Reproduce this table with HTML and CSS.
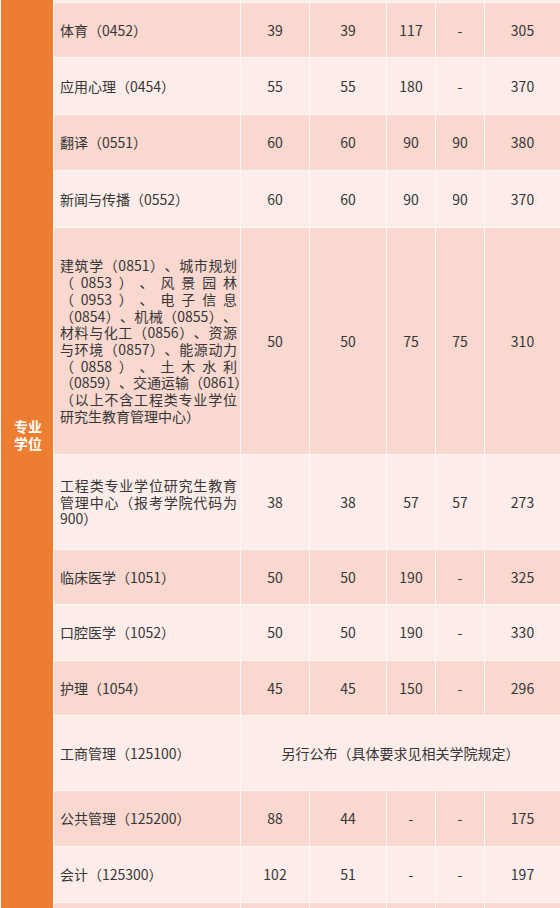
FILE: index.html
```html
<!DOCTYPE html>
<html lang="zh-CN">
<head>
<meta charset="utf-8">
<title>专业学位复试分数线</title>
<link rel="stylesheet" href="styles.css">
</head>
<body>
<div class="sheet">
  <div class="cat">专业<br>学位</div>

  <div class="row light edge"><div></div><div></div><div></div><div></div><div></div><div></div></div>

  <div class="row dark"><div class="name">体育（0452）</div><div class="num">39</div><div class="num">39</div><div class="num">117</div><div class="num">-</div><div class="num">305</div></div>
  <div class="row light"><div class="name">应用心理（0454）</div><div class="num">55</div><div class="num">55</div><div class="num">180</div><div class="num">-</div><div class="num">370</div></div>
  <div class="row dark"><div class="name">翻译（0551）</div><div class="num">60</div><div class="num">60</div><div class="num">90</div><div class="num">90</div><div class="num">380</div></div>
  <div class="row light"><div class="name">新闻与传播（0552）</div><div class="num">60</div><div class="num">60</div><div class="num">90</div><div class="num">90</div><div class="num">370</div></div>
  <div class="row dark"><div class="name multi"><span class="ln">建筑学（0851）、城市规划</span><span class="ln">（0853）、风景园林</span><span class="ln">（0953）、电子信息</span><span class="ln">（0854）、机械（0855）、</span><span class="ln">材料与化工（0856）、资源</span><span class="ln">与环境（0857）、能源动力</span><span class="ln">（0858）、土木水利</span><span class="ln over">（0859）、交通运输（0861）</span><span class="ln">（以上不含工程类专业学位</span><span class="ln last">研究生教育管理中心）</span></div><div class="num">50</div><div class="num">50</div><div class="num">75</div><div class="num">75</div><div class="num">310</div></div>
  <div class="row light"><div class="name multi">工程类专业学位研究生教育管理中心（报考学院代码为900）</div><div class="num">38</div><div class="num">38</div><div class="num">57</div><div class="num">57</div><div class="num">273</div></div>
  <div class="row dark"><div class="name">临床医学（1051）</div><div class="num">50</div><div class="num">50</div><div class="num">190</div><div class="num">-</div><div class="num">325</div></div>
  <div class="row light"><div class="name">口腔医学（1052）</div><div class="num">50</div><div class="num">50</div><div class="num">190</div><div class="num">-</div><div class="num">330</div></div>
  <div class="row dark"><div class="name">护理（1054）</div><div class="num">45</div><div class="num">45</div><div class="num">150</div><div class="num">-</div><div class="num">296</div></div>
  <div class="row light"><div class="name">工商管理（125100）</div><div class="num span5">另行公布（具体要求见相关学院规定）</div></div>
  <div class="row dark"><div class="name">公共管理（125200）</div><div class="num">88</div><div class="num">44</div><div class="num">-</div><div class="num">-</div><div class="num">175</div></div>
  <div class="row light"><div class="name">会计（125300）</div><div class="num">102</div><div class="num">51</div><div class="num">-</div><div class="num">-</div><div class="num">197</div></div>

  <div class="row dark edge"><div></div><div></div><div></div><div></div><div></div><div></div></div>
</div>
</body>
</html>
```
FILE: styles.css
```css
html, body {
  margin: 0;
  padding: 0;
  background: #ffffff;
}

body {
  font-family: "Noto Sans CJK SC", "Noto Sans", sans-serif;
  font-size: 14px;
  color: #363636;
  overflow: hidden;
}

.sheet {
  display: grid;
  grid-template-columns: 52px 186px 68px 76px 48px 48px 75px;
  grid-template-rows: 2px 54px 56px 55px 56px 226px 94px 54px 55px 54px 74px 55px 55px 60px;
  gap: 1px;
  padding: 0 0 0 1px;
  background: #fdf6f4;
  width: 560px;
  box-sizing: border-box;
}

.cat {
  grid-column: 1;
  grid-row: 1 / -1;
  background: #ed7d31;
  color: #ffffff;
  font-weight: 700;
  font-size: 14px;
  line-height: 17px;
  text-align: center;
  padding-top: 418px;
  padding-left: 2px;
}

.row {
  display: contents;
}

.row > div {
  display: grid;
  grid-template-columns: minmax(0, 1fr);
  align-content: center;
  min-width: 0;
}

.row.dark > div {
  background: #f8d8cf;
}

.row.light > div {
  background: #fcedea;
}

.name {
  padding: 0 3px 0 6px;
  text-align: justify;
  line-height: 17px;
  text-spacing-trim: space-all;
}

.multi {
  line-height: 16.7px;
}

.ln {
  display: block;
  text-align: justify;
  text-align-last: justify;
}

.ln.over {
  white-space: nowrap;
  text-align-last: left;
}

.ln.last {
  text-align-last: left;
}

.num {
  text-align: center;
  line-height: 17px;
}

.span5 {
  grid-column: span 5;
}
```
